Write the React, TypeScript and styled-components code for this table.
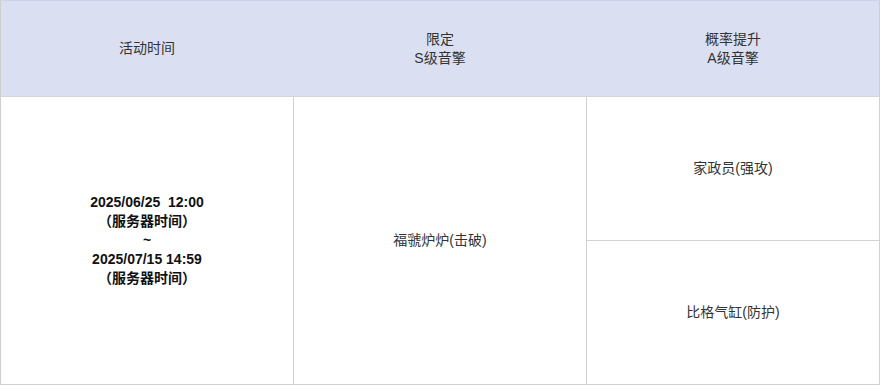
import React from 'react';
import styled, { createGlobalStyle } from 'styled-components';

const GlobalStyle = createGlobalStyle`
  html, body {
    margin: 0;
    padding: 0;
    background: #ffffff;
  }

  body {
    font-family: 'Liberation Sans', 'Noto Sans CJK SC', sans-serif;
  }
`;

const Table = styled.div`
  box-sizing: border-box;
  width: 880px;
  height: 385px;
  display: grid;
  grid-template-columns: repeat(3, 293px);
  grid-template-rows: 96px 144px 144px;
  border-top: 1px solid #cdd3e6;
  border-left: 1px solid #cfcfcf;
`;

const HeadCell = styled.div`
  box-sizing: border-box;
  display: flex;
  align-items: center;
  justify-content: center;
  text-align: center;
  background: #dae0f2;
  border-bottom: 1px solid #d4d4d4;
  border-right: 1px solid ${({ $last }: { $last?: boolean }) => ($last ? '#cfcfcf' : '#dae0f2')};
  color: #333333;
  font-size: 14px;
  line-height: 19px;
`;

const Cell = styled.div<{ $span?: boolean; $bold?: boolean }>`
  box-sizing: border-box;
  display: flex;
  align-items: center;
  justify-content: center;
  text-align: center;
  grid-row: ${({ $span }) => ($span ? 'span 2' : 'auto')};
  border-right: 1px solid #d2d2d2;
  border-bottom: 1px solid #d2d2d2;
  color: ${({ $bold }) => ($bold ? '#111111' : '#333333')};
  font-size: 14px;
  font-weight: ${({ $bold }) => ($bold ? 700 : 400)};
  line-height: 19px;
  white-space: pre;
`;

const Lines = styled.div`
  display: flex;
  flex-direction: column;
  align-items: center;
`;

export default function App() {
  return (
    <>
      <GlobalStyle />
      <Table>
        <HeadCell>活动时间</HeadCell>
        <HeadCell>
          <Lines>
            <span>限定</span>
            <span>S级音擎</span>
          </Lines>
        </HeadCell>
        <HeadCell $last>
          <Lines>
            <span>概率提升</span>
            <span>A级音擎</span>
          </Lines>
        </HeadCell>

        <Cell $span $bold>
          <Lines>
            <span>2025/06/25  12:00</span>
            <span>（服务器时间）</span>
            <span>~</span>
            <span>2025/07/15 14:59</span>
            <span>（服务器时间）</span>
          </Lines>
        </Cell>
        <Cell $span>福虢炉炉(击破)</Cell>
        <Cell>家政员(强攻)</Cell>
        <Cell>比格气缸(防护)</Cell>
      </Table>
    </>
  );
}
